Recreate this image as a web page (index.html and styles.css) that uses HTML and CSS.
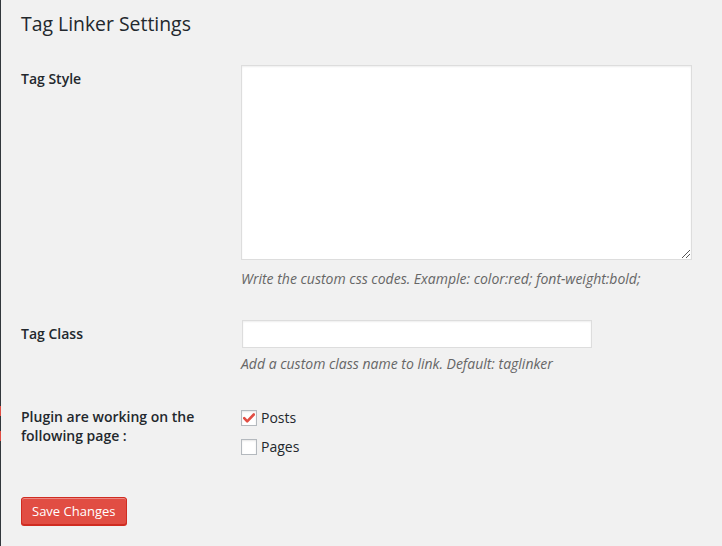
FILE: index.html
```html
<!DOCTYPE html>
<html>
<head>
<meta charset="utf-8">
<link rel="stylesheet" href="styles.css">
</head>
<body>
<div class="page">
  <div class="adminbar">
    <span class="mark mark-a"></span>
    <span class="mark mark-b"></span>
  </div>
  <div class="wrap">
    <h1 class="title">Tag Linker Settings</h1>
    <div class="row row-style">
      <div class="label">Tag Style</div>
      <div class="field">
        <div class="textarea"><span class="grip"></span></div>
        <p class="desc">Write the custom css codes. Example: color:red; font-weight:bold;</p>
      </div>
    </div>
    <div class="row row-class">
      <div class="label">Tag Class</div>
      <div class="field">
        <div class="input"></div>
        <p class="desc">Add a custom class name to link. Default: taglinker</p>
      </div>
    </div>
    <div class="row row-pages">
      <div class="label">Plugin are working on the following page :</div>
      <div class="field options">
        <label class="option"><span class="box checked"><svg width="12" height="10" viewBox="0 0 12 10"><path d="M1.2 5.2 L4.2 8.3 L10.8 1.5" fill="none" stroke="#e14d43" stroke-width="2.6" stroke-linecap="round" stroke-linejoin="round"/></svg></span>Posts</label>
        <label class="option"><span class="box"></span>Pages</label>
      </div>
    </div>
    <div class="submit"><span class="button">Save Changes</span></div>
  </div>
</div>
</body>
</html>
```
FILE: styles.css
```css
html, body {
  margin: 0;
  padding: 0;
  background: #f1f1f1;
}
body {
  font-family: "Open Sans", "Liberation Sans", sans-serif;
  color: #23282d;
  font-size: 14px;
}
.page {
  display: flex;
  min-height: 546px;
}
.adminbar {
  width: 1px;
  background: #32373c;
  position: relative;
  flex: none;
}
.mark {
  position: absolute;
  left: 0;
  width: 1px;
  height: 10px;
  background: #e14d43;
}
.mark-a { top: 406px; }
.mark-b { top: 431px; }
.wrap {
  padding-left: 20px;
  flex: 1;
}
.title {
  margin: 0;
  padding: 9px 0 12px;
  font-size: 19.4px;
  font-weight: 400;
  line-height: 29px;
  color: #23282d;
}
.row {
  display: grid;
  grid-template-columns: 220px 1fr;
}
.label {
  padding: 20px 10px 20px 0;
  font-weight: 600;
  line-height: 19px;
  font-size: 14px;
}
.row-style .label { padding-top: 19px; }
.row-pages .label { padding-top: 18px; }
.field {
  padding: 15px 0;
}
.textarea {
  width: 449px;
  height: 193px;
  background: #fff;
  border: 1px solid #ddd;
  box-shadow: inset 0 1px 2px rgba(0,0,0,.07);
  position: relative;
}
.grip {
  position: absolute;
  right: 1px;
  bottom: 1px;
  width: 8px;
  height: 8px;
  background:
    linear-gradient(135deg, transparent 45%, #555 45%, #555 55%, transparent 55%, transparent 70%, #555 70%, #555 80%, transparent 80%);
}
.desc {
  margin: 5px 0 0;
  font-style: italic;
  color: #666;
  line-height: 20px;
}
.row-style .desc { margin-top: 9px; }
.row-class .field { padding-left: 1px; padding-top: 16px; }
.row-class .desc { margin-left: -1px; margin-top: 6px; }
.row-pages .field { padding-top: 14px; }
.input {
  width: 348px;
  height: 26px;
  background: #fff;
  border: 1px solid #ddd;
  box-shadow: inset 0 1px 2px rgba(0,0,0,.07);
}
.options {
  display: flex;
  flex-direction: column;
}
.option {
  display: flex;
  align-items: center;
  height: 29px;
  line-height: 20px;
}
.box {
  width: 14px;
  height: 14px;
  border: 1px solid #b4b9be;
  background: #fff;
  margin-right: 4px;
  display: flex;
  align-items: center;
  justify-content: center;
  box-shadow: inset 0 1px 2px rgba(0,0,0,.1);
}
.submit {
  padding: 21px 0 0;
}
.button {
  display: inline-block;
  background: #e14d43;
  border: 1px solid #d02c21;
  border-radius: 3px;
  color: #fff;
  font-size: 13px;
  line-height: 26px;
  height: 26px;
  padding: 0 11px 0 10px;
  box-shadow: inset 0 1px 0 #ec8a85, 0 1px 0 #d02c21;
}
```
